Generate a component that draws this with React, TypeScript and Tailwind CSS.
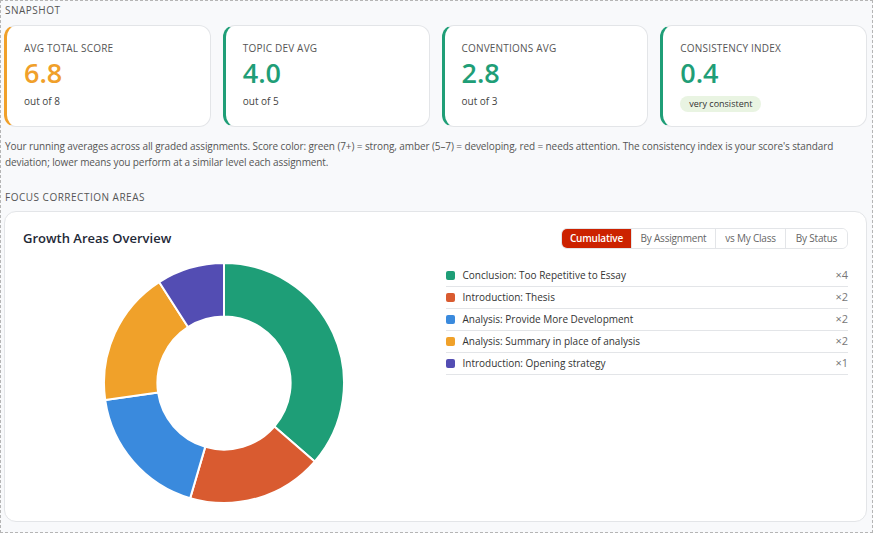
import React from 'react';

const stats = [
  { label: 'Avg Total Score', value: '6.8', sub: 'out of 8', accent: 'border-l-[#f0a02a]', text: 'text-[#f0a02a]' },
  { label: 'Topic Dev Avg', value: '4.0', sub: 'out of 5', accent: 'border-l-[#1f9e77]', text: 'text-[#1f9e77]' },
  { label: 'Conventions Avg', value: '2.8', sub: 'out of 3', accent: 'border-l-[#1f9e77]', text: 'text-[#1f9e77]' },
  { label: 'Consistency Index', value: '0.4', badge: 'very consistent', accent: 'border-l-[#1f9e77]', text: 'text-[#1f9e77]' },
];

const areas = [
  { name: 'Conclusion: Too Repetitive to Essay', count: 4, color: '#1e9e77', swatch: 'bg-[#1e9e77]' },
  { name: 'Introduction: Thesis', count: 2, color: '#d95b30', swatch: 'bg-[#d95b30]' },
  { name: 'Analysis: Provide More Development', count: 2, color: '#3a8add', swatch: 'bg-[#3a8add]' },
  { name: 'Analysis: Summary in place of analysis', count: 2, color: '#f0a12a', swatch: 'bg-[#f0a12a]' },
  { name: 'Introduction: Opening strategy', count: 1, color: '#534db3', swatch: 'bg-[#534db3]' },
];

const tabs = [
  { label: 'Cumulative', width: 'w-[69px]' },
  { label: 'By Assignment', width: 'w-[84px]' },
  { label: 'vs My Class', width: 'w-[70px]' },
  { label: 'By Status', width: 'w-[62px]' },
];

function Donut({ size = 242, inner = 0.555 }) {
  const c = size / 2;
  const r = c - 1;
  const ri = r * inner;
  const total = areas.reduce((s, a) => s + a.count, 0);
  const pt = (a: number, rad: number) => [c + rad * Math.sin(a), c - rad * Math.cos(a)];

  let start = 0;
  const slices = areas.map((a) => {
    const sweep = (a.count / total) * Math.PI * 2;
    const end = start + sweep;
    const large = sweep > Math.PI ? 1 : 0;
    const [x1, y1] = pt(start, r);
    const [x2, y2] = pt(end, r);
    const [x3, y3] = pt(end, ri);
    const [x4, y4] = pt(start, ri);
    const d = `M${x1} ${y1} A${r} ${r} 0 ${large} 1 ${x2} ${y2} L${x3} ${y3} A${ri} ${ri} 0 ${large} 0 ${x4} ${y4} Z`;
    start = end;
    return <path key={a.name} d={d} fill={a.color} stroke="#fff" strokeWidth={2} strokeLinejoin="round" />;
  });

  return (
    <svg width={size} height={size} viewBox={`0 0 ${size} ${size}`}>
      {slices}
    </svg>
  );
}

export default function App() {
  return (
    <div
      className="w-[873px] h-[533px] overflow-hidden border border-dashed border-[#b5b5b5] bg-[#f8f9fb] pl-[3px] pr-[5px] pt-[2px] text-[#333]"
      style={{ fontFamily: '"Open Sans", "Noto Sans", sans-serif' }}
    >
      <div className="text-[10px] leading-[14px] tracking-[0.5px] uppercase text-[#555] pl-[1px]">Snapshot</div>

      {/* Stat cards */}
      <div className="mt-[8px] grid grid-cols-4 gap-[12px]">
        {stats.map((s) => (
          <div
            key={s.label}
            className={`h-[102px] rounded-xl border border-[#e3e5e8] border-l-[3px] bg-white pl-[17px] pt-[15px] ${s.accent}`}
          >
            <div className="text-[10px] leading-[14px] uppercase tracking-[0.2px] text-[#555]">{s.label}</div>
            <div className={`mt-[2px] text-[27px] leading-[32px] font-semibold ${s.text}`}>{s.value}</div>
            {s.sub && <div className="mt-[5px] text-[10px] leading-[14px] text-[#444]">{s.sub}</div>}
            {s.badge && (
              <span className="mt-[4px] inline-block rounded-full bg-[#e9f4e2] px-[9px] text-[9px] leading-[16px] text-[#333]">
                {s.badge}
              </span>
            )}
          </div>
        ))}
      </div>

      <p className="mt-[11px] pl-[1px] text-[10px] leading-[16px] tracking-[-0.1px] text-[#555]">
        Your running averages across all graded assignments. Score color: green (7+) = strong, amber (5–7) = developing, red = needs attention. The consistency index is your score's standard deviation; lower means you perform at a similar level each assignment.
      </p>

      <div className="mt-[20px] pl-[1px] text-[10px] leading-[14px] tracking-[0.5px] uppercase text-[#555]">Focus Correction Areas</div>

      {/* Growth areas card */}
      <div className="mt-[7px] h-[311px] rounded-xl border border-[#e3e5e8] bg-white px-[18px] pt-[16px]">
        <div className="flex items-center justify-between">
          <h3 className="text-[13px] font-semibold text-[#1f2937]">Growth Areas Overview</h3>
          <div className="flex h-[21px] overflow-hidden rounded-[6px] border border-[#e3e5e8] text-[10px] tracking-[-0.2px]">
            {tabs.map((t, i) => (
              <button
                key={t.label}
                className={
                  i === 0
                    ? `${t.width} bg-[#cc2200] font-semibold text-white`
                    : `${t.width} border-l border-[#e3e5e8] bg-white text-[#666]`
                }
              >
                {t.label}
              </button>
            ))}
          </div>
        </div>

        <div className="mt-[13px] grid grid-cols-2 gap-[20px]">
          <div className="flex justify-center">
            <Donut />
          </div>
          <ul className="mt-[3px]">
            {areas.map((a) => (
              <li key={a.name} className="flex h-[22px] items-center border-b border-[#e3e5e8] text-[10px]">
                <span className={`h-[9px] w-[9px] rounded-[2px] ${a.swatch}`} />
                <span className="ml-[8px] flex-1 text-[#333]">{a.name}</span>
                <span className="text-[11px] text-[#777]">×{a.count}</span>
              </li>
            ))}
          </ul>
        </div>
      </div>
    </div>
  );
}
